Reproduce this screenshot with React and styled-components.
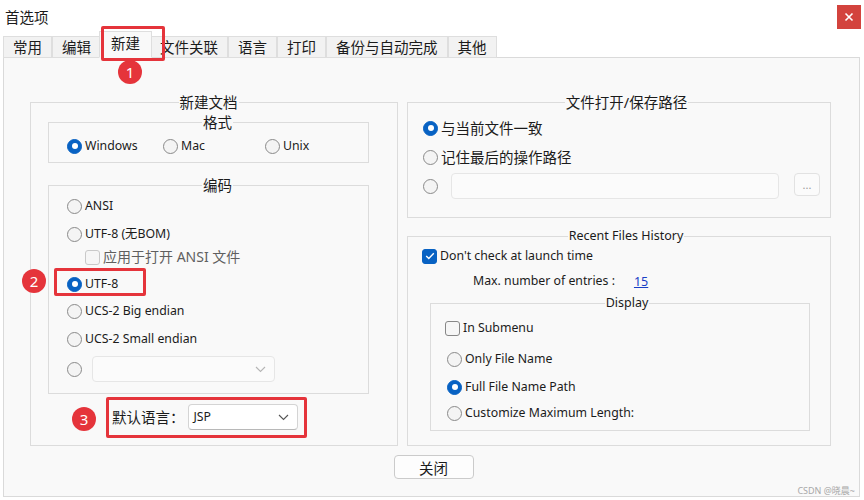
import React from "react";
import styled, { createGlobalStyle } from "styled-components";

const GlobalStyle = createGlobalStyle`
  html, body { margin: 0; padding: 0; background: #fff; }
  body {
    font-family: "Noto Sans", "Noto Sans CJK SC", sans-serif;
    font-size: 12.3px;
    color: #1b1b1b;
  }
`;

const tabs = ["常用", "编辑", "新建", "文件关联", "语言", "打印", "备份与自动完成", "其他"];

const Window = styled.div`
  position: relative;
  width: 864px;
  height: 500px;
  overflow: hidden;
  background: #fff;
  display: flex;
  flex-direction: column;
`;

const TitleBar = styled.div`
  height: 33px;
  flex: none;
  display: flex;
  align-items: center;
  padding: 0 3px 0 5px;
  font-size: 14.5px;
`;

const TitleText = styled.span`
  flex: 1;
`;

const CloseButton = styled.div`
  flex: none;
  width: 24px;
  height: 24px;
  display: block;
  svg {
    display: block;
  }
`;

const TabStrip = styled.div`
  height: 24px;
  flex: none;
  display: flex;
  align-items: flex-end;
  padding-left: 3px;
  position: relative;
  z-index: 1;
`;

const Tab = styled.div`
  height: ${(p) => (p.$active ? 27 : 22)}px;
  box-sizing: border-box;
  padding: 0 ${(p) => (p.$active ? 11 : 9)}px;
  padding-bottom: ${(p) => (p.$active ? 4 : 1)}px;
  margin: 0 ${(p) => (p.$active ? -2 : 0)}px -1px;
  display: flex;
  align-items: center;
  font-size: 14.5px;
  background: ${(p) => (p.$active ? "#f9f9f9" : "#f2f2f2")};
  border: 1px solid #dedede;
  border-bottom-color: ${(p) => (p.$active ? "#f9f9f9" : "#dedede")};
  position: relative;
  z-index: ${(p) => (p.$active ? 2 : 0)};
`;

const Panel = styled.div`
  flex: 1;
  margin: 0 4px 3px 3px;
  border: 1px solid #dadada;
  background: #f9f9f9;
  padding: 35px 28px 0 26px;
  display: flex;
  flex-direction: column;
`;

const Columns = styled.div`
  display: grid;
  grid-template-columns: 368px 424px;
  gap: 9px;
`;

const Stack = styled.div`
  display: flex;
  flex-direction: column;
  gap: 9px;
`;

const Group = styled.fieldset`
  margin: ${(p) => p.$m || "0"};
  padding: ${(p) => p.$pad || "0"};
  border: 1px solid #dcdcdc;
  min-width: 0;
  box-sizing: border-box;
  width: ${(p) => (p.$w ? `${p.$w}px` : "auto")};
  height: ${(p) => (p.$h ? `${p.$h}px` : "auto")};
  display: flex;
  flex-direction: column;
`;

const Legend = styled.legend`
  margin: 0 auto;
  padding: 0 1px;
  line-height: 18px;
  font-size: ${(p) => p.$size || "14.5px"};
`;

const Row = styled.div`
  display: flex;
  align-items: center;
  height: ${(p) => p.$h || 22}px;
  margin-top: ${(p) => p.$mt || 0}px;
  margin-left: ${(p) => p.$ml || 0}px;
  gap: ${(p) => p.$gap ?? 3}px;
`;

const FormatRow = styled.div`
  display: grid;
  grid-template-columns: 96px 102px auto;
  height: 20px;
  align-items: center;
  margin: 4px 0 7px;
`;

const Label = styled.span`
  font-size: ${(p) => p.$size || "12.3px"};
  color: ${(p) => (p.$dim ? "#5f5f5f" : "#1b1b1b")};
  white-space: nowrap;
  line-height: 18px;
`;

const RadioDot = styled.span`
  width: 15px;
  height: 15px;
  flex: none;
  box-sizing: border-box;
  border-radius: 50%;
  border: 1px solid ${(p) => (p.$on ? "#0862c3" : "#8a8a8a")};
  background: ${(p) => (p.$on ? "#0862c3" : "#f4f4f4")};
  display: inline-flex;
  align-items: center;
  justify-content: center;
  &::after {
    content: "";
    display: ${(p) => (p.$on ? "block" : "none")};
    width: 6px;
    height: 6px;
    border-radius: 50%;
    background: #fff;
  }
`;

const CheckBox = styled.span`
  width: 15px;
  height: 15px;
  flex: none;
  box-sizing: border-box;
  border-radius: 3px;
  border: 1px solid ${(p) => (p.$on ? "#0862c3" : p.$disabled ? "#c9c9c9" : "#878787")};
  background: ${(p) => (p.$on ? "#0862c3" : "#f6f6f6")};
  display: inline-flex;
  align-items: center;
  justify-content: center;
`;

const Combo = styled.div`
  width: ${(p) => p.$w}px;
  height: 26px;
  box-sizing: border-box;
  border: 1px solid ${(p) => (p.$disabled ? "#e6e6e6" : "#d4d4d4")};
  border-bottom-color: ${(p) => (p.$disabled ? "#e6e6e6" : "#b8b8b8")};
  border-radius: 4px;
  background: ${(p) => (p.$disabled ? "#fbfbfb" : "#fff")};
  display: flex;
  align-items: center;
  justify-content: space-between;
  padding: 0 8px 0 5px;
`;

const PathInput = styled.div`
  width: 328px;
  height: 26px;
  box-sizing: border-box;
  border: 1px solid #e6e6e6;
  border-radius: 4px;
  background: #fbfbfb;
`;

const SmallButton = styled.div`
  width: 26px;
  height: 23px;
  box-sizing: border-box;
  border: 1px solid #e2e2e2;
  border-radius: 4px;
  background: #fbfbfb;
  color: #9a9a9a;
  font-size: 11px;
  display: flex;
  align-items: center;
  justify-content: center;
  margin: -3px 0 0 2px;
`;

const LinkNum = styled.span`
  color: #1a3fc6;
  text-decoration: underline;
  font-size: 12.5px;
`;

const ButtonRow = styled.div`
  display: flex;
  justify-content: center;
  margin-top: 9px;
  padding-left: 6px;
`;

const DialogButton = styled.div`
  width: 80px;
  height: 24px;
  box-sizing: border-box;
  border: 1px solid #cbcbcb;
  border-radius: 4px;
  background: #fdfdfd;
  display: flex;
  align-items: center;
  justify-content: center;
  font-size: 14.5px;
`;

const Mark = styled.div`
  position: absolute;
  left: ${(p) => p.$x}px;
  top: ${(p) => p.$y}px;
  width: ${(p) => p.$w}px;
  height: ${(p) => p.$h}px;
  box-sizing: border-box;
  border: 3px solid #e5343b;
  border-radius: 2px;
  z-index: 5;
`;

const Badge = styled.div`
  position: absolute;
  left: ${(p) => p.$x - 12}px;
  top: ${(p) => p.$y - 12}px;
  width: 24px;
  height: 24px;
  border-radius: 50%;
  background: #e5343b;
  color: #fff;
  font-size: 15px;
  display: flex;
  align-items: center;
  justify-content: center;
  z-index: 5;
`;

const Watermark = styled.div`
  position: absolute;
  right: 9px;
  bottom: 3px;
  font-size: 9px;
  color: #a8a8a8;
  z-index: 5;
`;

const Chevron = ({ color }) => (
  <svg width="11" height="7" viewBox="0 0 11 7">
    <polyline points="1,1 5.5,5.5 10,1" fill="none" stroke={color} strokeWidth="1.1" />
  </svg>
);

const Tick = () => (
  <svg width="10" height="8" viewBox="0 0 10 8">
    <polyline points="1.2,4 3.8,6.5 8.8,1.2" fill="none" stroke="#fff" strokeWidth="1.4" />
  </svg>
);

const Radio = ({ on, children, size, ...rest }) => (
  <Row {...rest}>
    <RadioDot $on={on} />
    {children !== undefined && <Label $size={size}>{children}</Label>}
  </Row>
);

const Check = ({ on, disabled, children, size, ...rest }) => (
  <Row {...rest}>
    <CheckBox $on={on} $disabled={disabled}>{on && <Tick />}</CheckBox>
    <Label $size={size} $dim={disabled}>{children}</Label>
  </Row>
);

export default function App() {
  return (
    <>
      <GlobalStyle />
      <Window>
        <TitleBar>
          <TitleText>首选项</TitleText>
          <CloseButton>
            <svg width="24" height="24" viewBox="0 0 24 24">
              <rect x="0" y="0" width="24" height="24" fill="#d3433d" />
              <path d="M8.5 8.5L15.5 15.5M15.5 8.5L8.5 15.5" stroke="#ffffff" strokeWidth="1.6" />
            </svg>
          </CloseButton>
        </TitleBar>

        <TabStrip>
          {tabs.map((t) => (
            <Tab key={t} $active={t === "新建"}>
              {t}
            </Tab>
          ))}
        </TabStrip>

        <Panel>
          <Columns>
            <Group $pad="2px 28px 0 17px">
              <Legend>新建文档</Legend>
              <Group $pad="0 0 0 18px">
                <Legend>格式</Legend>
                <FormatRow>
                  <Radio on>Windows</Radio>
                  <Radio>Mac</Radio>
                  <Radio>Unix</Radio>
                </FormatRow>
              </Group>

              <Group $m="13px 0 0 0" $pad="0 0 11px 18px">
                <Legend>编码</Legend>
                <Radio $mt={1}>ANSI</Radio>
                <Radio $mt={6}>UTF-8 (无BOM)</Radio>
                <Check disabled $mt={1} $ml={18} size="14px">
                  应用于打开 ANSI 文件
                </Check>
                <Radio on $mt={5}>UTF-8</Radio>
                <Radio $mt={5}>UCS-2 Big endian</Radio>
                <Radio $mt={6}>UCS-2 Small endian</Radio>
                <Row $h={26} $mt={6} $gap={10}>
                  <RadioDot />
                  <Combo $w={183} $disabled>
                    <span />
                    <Chevron color="#b5b5b5" />
                  </Combo>
                </Row>
              </Group>

              <Row $h={26} $mt={10} $ml={64} $gap={3}>
                <Label $size="14.5px">默认语言：</Label>
                <Combo $w={110}>
                  <Label>JSP</Label>
                  <Chevron color="#555" />
                </Combo>
              </Row>
            </Group>

            <Stack>
              <Group $h={125} $pad="0 0 0 15px">
                <Legend>文件打开/保存路径</Legend>
                <Radio on $mt={6} size="14.5px">与当前文件一致</Radio>
                <Radio $mt={7} size="14.5px">记住最后的操作路径</Radio>
                <Row $h={26} $mt={5} $gap={13}>
                  <RadioDot />
                  <PathInput />
                  <SmallButton>...</SmallButton>
                </Row>
              </Group>

              <Group $h={219} $pad="0 0 0 14px">
                <Legend $size="12.5px">Recent Files History</Legend>
                <Check on $mt={0}>Don't check at launch time</Check>
                <Row $mt={3} $ml={51} $gap={19}>
                  <Label>Max. number of entries :</Label>
                  <LinkNum>15</LinkNum>
                </Row>
                <Group $m="2px 0 0 8px" $pad="0 0 6px 14px" $w={380}>
                  <Legend $size="12.5px">Display</Legend>
                  <Check $mt={5}>In Submenu</Check>
                  <Radio $mt={9} $ml={2}>Only File Name</Radio>
                  <Radio on $mt={6} $ml={2}>Full File Name Path</Radio>
                  <Radio $mt={4} $ml={2}>Customize Maximum Length:</Radio>
                </Group>
              </Group>
            </Stack>
          </Columns>

          <ButtonRow>
            <DialogButton>关闭</DialogButton>
          </ButtonRow>
        </Panel>

        <Mark $x={101} $y={26} $w={64} $h={35} />
        <Badge $x={130} $y={72}>1</Badge>
        <Mark $x={54} $y={268} $w={92} $h={28} />
        <Badge $x={34} $y={281}>2</Badge>
        <Mark $x={106} $y={397} $w={201} $h={41} />
        <Badge $x={84} $y={419}>3</Badge>
        <Watermark>CSDN @晓晨~</Watermark>
      </Window>
    </>
  );
}
